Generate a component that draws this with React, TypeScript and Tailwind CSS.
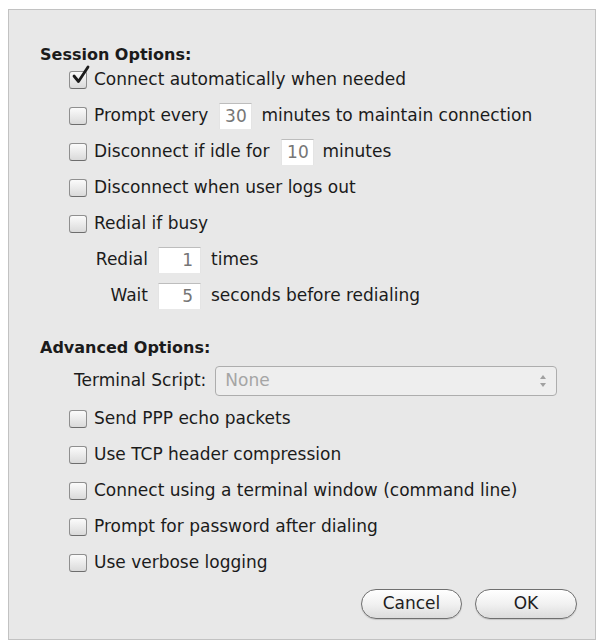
import { ReactNode } from 'react';

const font = { fontFamily: '"DejaVu Sans", "Liberation Sans", sans-serif' };

const Checkbox = ({ checked = false }: { checked?: boolean }) => (
    <span className="relative inline-block w-[18px] h-[18px] shrink-0 rounded-[3px] border border-[#8f8f8f] border-b-[#6d6d6d] bg-gradient-to-b from-[#fbfbfb] to-[#dadada]">
        {checked && (
            <svg
                viewBox="0 0 20 20"
                className="absolute left-[1px] -top-[7px] w-[20px] h-[20px]"
                fill="none"
                stroke="#1c1c1c"
                strokeWidth="2.8"
                strokeLinecap="round"
                strokeLinejoin="round"
            >
                <path d="M3 11 L7.5 16.5 L17 2" />
            </svg>
        )}
    </span>
);

const CheckRow = ({ label, checked, children }: { label?: string; checked?: boolean; children?: ReactNode }) => (
    <div className="h-[26px] flex items-center pl-[60px]">
        <Checkbox checked={checked} />
        <div className="ml-[7px] flex items-center">
            {label && <span>{label}</span>}
            {children}
        </div>
    </div>
);

const NumField = ({ value, width, align = 'center' }: { value: string; width: string; align?: 'center' | 'right' }) => (
    <span
        className={`inline-flex items-center h-[26px] ${width} ${align === 'right' ? 'justify-end pr-[7px]' : 'justify-center'} bg-white border-t border-t-[#bdbdbd] border-x border-x-[#e4e4e4] text-[#767676]`}
    >
        {value}
    </span>
);

const PillButton = ({ label, width }: { label: string; width: string }) => (
    <button
        className={`h-[30px] ${width} rounded-full border border-[#6f6f6f] bg-gradient-to-b from-[#ffffff] via-[#f1f1f1] to-[#dcdcdc] text-[#1e1e1e] shadow-[0_1px_1px_rgba(0,0,0,0.15)]`}
    >
        {label}
    </button>
);

export default function App() {
    return (
        <div className="w-[604px] h-[643px] bg-white pt-[9px] pl-[8px]" style={font}>
            <div className="w-[588px] h-[631px] bg-[#e8e8e8] border border-[#c2c2c2] text-[17px] text-[#1b1b1b] pt-[32px]">
                {/* session group */}
                <div className="h-[26px] flex items-center pl-[31px] text-[16px] font-bold">Session Options:</div>

                <div className="-mt-[1px] flex flex-col gap-[10px]">
                    <CheckRow label="Connect automatically when needed" checked />
                    <CheckRow>
                        <span>Prompt every</span>
                        <span className="ml-[11px] mr-[9px]">
                            <NumField value="30" width="w-[33px]" />
                        </span>
                        <span>minutes to maintain connection</span>
                    </CheckRow>
                    <CheckRow>
                        <span>Disconnect if idle for</span>
                        <span className="ml-[12px] mr-[8px]">
                            <NumField value="10" width="w-[33px]" />
                        </span>
                        <span>minutes</span>
                    </CheckRow>
                    <CheckRow label="Disconnect when user logs out" />
                    <CheckRow label="Redial if busy" />

                    <div className="h-[26px] flex items-center pl-[60px]">
                        <span className="w-[79px] text-right">Redial</span>
                        <span className="ml-[10px] mr-[10px]">
                            <NumField value="1" width="w-[43px]" align="right" />
                        </span>
                        <span>times</span>
                    </div>
                    <div className="h-[26px] flex items-center pl-[60px]">
                        <span className="w-[79px] text-right">Wait</span>
                        <span className="ml-[10px] mr-[10px]">
                            <NumField value="5" width="w-[43px]" align="right" />
                        </span>
                        <span>seconds before redialing</span>
                    </div>
                </div>

                {/* advanced group */}
                <div className="mt-[26px] h-[26px] flex items-center pl-[31px] text-[16px] font-bold">Advanced Options:</div>

                <div className="mt-[5px] h-[30px] flex items-center pl-[65px] pr-[38px]">
                    <span>Terminal Script:</span>
                    <div className="ml-[9px] flex-1 h-[30px] rounded-[4px] border border-[#adadad] bg-[#eeeeee] flex items-center justify-between pl-[9px] pr-[9px]">
                        <span className="text-[#a5a5a5]">None</span>
                        <svg viewBox="0 0 8 14" className="w-[8px] h-[14px]" fill="#a0a0a0">
                            <path d="M4 1 L7 5 L1 5 Z" />
                            <path d="M4 13 L7 9 L1 9 Z" />
                        </svg>
                    </div>
                </div>

                <div className="mt-[10px] flex flex-col gap-[10px]">
                    <CheckRow label="Send PPP echo packets" />
                    <CheckRow label="Use TCP header compression" />
                    <CheckRow label="Connect using a terminal window (command line)" />
                    <CheckRow label="Prompt for password after dialing" />
                    <CheckRow label="Use verbose logging" />
                </div>

                <div className="mt-[13px] flex items-center justify-end gap-[13px] pr-[18px]">
                    <PillButton label="Cancel" width="w-[101px]" />
                    <PillButton label="OK" width="w-[102px]" />
                </div>
            </div>
        </div>
    );
}
